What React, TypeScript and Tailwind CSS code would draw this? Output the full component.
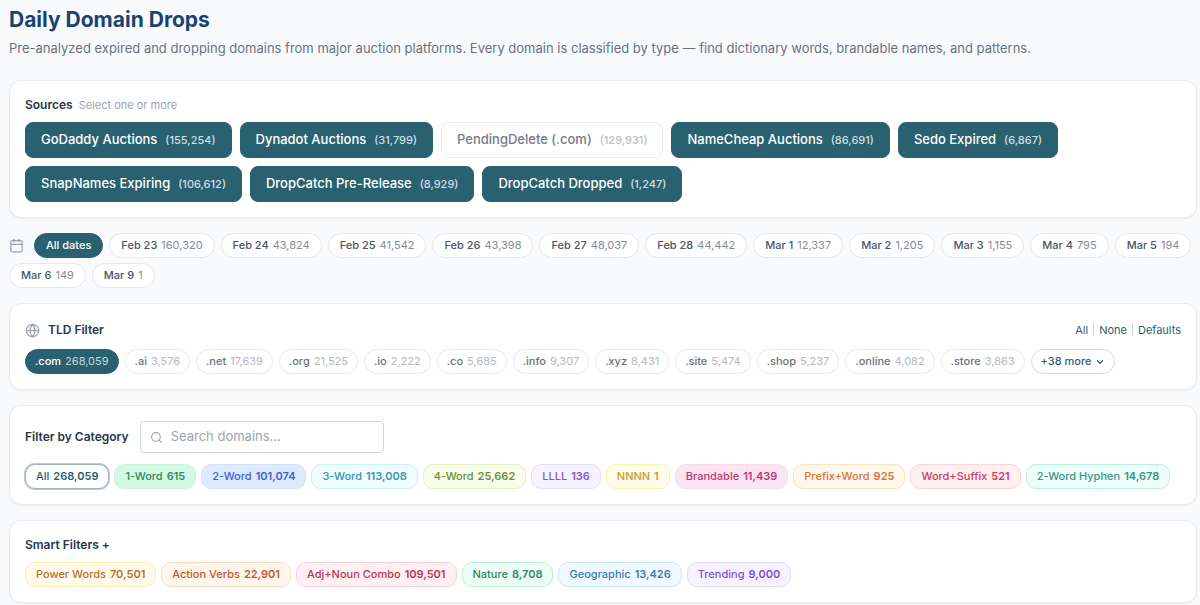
import { Calendar, ChevronDown, Globe, Search } from "lucide-react";

type Item = {
  label: string;
  count?: string;
  active?: boolean;
};

type Tag = {
  label: string;
  count: string;
  style: string;
};

const sources: Item[] = [
  { label: "GoDaddy Auctions", count: "155,254", active: true },
  { label: "Dynadot Auctions", count: "31,799", active: true },
  { label: "PendingDelete (.com)", count: "129,931" },
  { label: "NameCheap Auctions", count: "86,691", active: true },
  { label: "Sedo Expired", count: "6,867", active: true },
  { label: "SnapNames Expiring", count: "106,612", active: true },
  { label: "DropCatch Pre-Release", count: "8,929", active: true },
  { label: "DropCatch Dropped", count: "1,247", active: true },
];

const dates: Item[] = [
  { label: "All dates", active: true },
  { label: "Feb 23", count: "160,320" },
  { label: "Feb 24", count: "43,824" },
  { label: "Feb 25", count: "41,542" },
  { label: "Feb 26", count: "43,398" },
  { label: "Feb 27", count: "48,037" },
  { label: "Feb 28", count: "44,442" },
  { label: "Mar 1", count: "12,337" },
  { label: "Mar 2", count: "1,205" },
  { label: "Mar 3", count: "1,155" },
  { label: "Mar 4", count: "795" },
  { label: "Mar 5", count: "194" },
  { label: "Mar 6", count: "149" },
  { label: "Mar 9", count: "1" },
];

const tlds: Item[] = [
  { label: ".com", count: "268,059", active: true },
  { label: ".ai", count: "3,576" },
  { label: ".net", count: "17,639" },
  { label: ".org", count: "21,525" },
  { label: ".io", count: "2,222" },
  { label: ".co", count: "5,685" },
  { label: ".info", count: "9,307" },
  { label: ".xyz", count: "8,431" },
  { label: ".site", count: "5,474" },
  { label: ".shop", count: "5,237" },
  { label: ".online", count: "4,082" },
  { label: ".store", count: "3,863" },
];

const categories: Tag[] = [
  { label: "All", count: "268,059", style: "border-[#9fb4bd] bg-white text-[#2a5f70] ring-1 ring-[#bccbd1]" },
  { label: "1-Word", count: "615", style: "border-[#c9f5dc] bg-[#d3f8e3] text-[#2f8a68]" },
  { label: "2-Word", count: "101,074", style: "border-[#d3e2fd] bg-[#dde9fd] text-[#4460cf]" },
  { label: "3-Word", count: "113,008", style: "border-[#c5f3fa] bg-[#effdff] text-[#3497ad]" },
  { label: "4-Word", count: "25,662", style: "border-[#e0f5b8] bg-[#f8fee9] text-[#6c8b3c]" },
  { label: "LLLL", count: "136", style: "border-[#e3dcfd] bg-[#f6f3ff] text-[#8655d6]" },
  { label: "NNNN", count: "1", style: "border-[#fdf0a8] bg-[#fffde9] text-[#c99a35]" },
  { label: "Brandable", count: "11,439", style: "border-[#fbdcec] bg-[#fce5f2] text-[#bd3a73]" },
  { label: "Prefix+Word", count: "925", style: "border-[#fddfb9] bg-[#fff8ee] text-[#d9743c]" },
  { label: "Word+Suffix", count: "521", style: "border-[#fdd3da] bg-[#fff0f2] text-[#d13b60]" },
  { label: "2-Word Hyphen", count: "14,678", style: "border-[#b5f3e4] bg-[#effdfa] text-[#399587]" },
];

const smartFilters: Tag[] = [
  { label: "Power Words", count: "70,501", style: "border-[#fdebb0] bg-[#fffbeb] text-[#b86f33]" },
  { label: "Action Verbs", count: "22,901", style: "border-[#fddcc0] bg-[#fff7ee] text-[#c2582f]" },
  { label: "Adj+Noun Combo", count: "109,501", style: "border-[#fdd3da] bg-[#fff0f2] text-[#bd3558]" },
  { label: "Nature", count: "8,708", style: "border-[#bdf2d6] bg-[#edfdf5] text-[#348565]" },
  { label: "Geographic", count: "13,426", style: "border-[#c8e9fc] bg-[#f0f9ff] text-[#377fae]" },
  { label: "Trending", count: "9,000", style: "border-[#e3dcfd] bg-[#f6f3ff] text-[#8050d0]" },
];

const card = "rounded-xl border border-[#e8ebef] bg-white p-[15px] shadow-xs";
const heading = "text-[12px] leading-[18px] font-semibold text-[#27364b]";
const pill = "flex h-[25px] items-center gap-1 border text-[11px] font-medium whitespace-nowrap";

function TagList({ tags }: { tags: Tag[] }) {
  return (
    <div className="flex flex-wrap gap-[5px]">
      {tags.map((tag) => (
        <button
          key={tag.label}
          type="button"
          className={`${pill} rounded-[10px] px-[10px] ${tag.style}`}
        >
          {tag.label}
          <span className="font-semibold">{tag.count}</span>
        </button>
      ))}
    </div>
  );
}

export default function App() {
  return (
    <main className="flex min-h-screen flex-col gap-[15px] bg-[#f8fafc] pr-[3px] pb-[2px] pl-[9px] font-['Inter',sans-serif]">
      <header className="pt-1 pb-[7px]">
        <h1 className="text-[21px] leading-8 font-bold text-[#1c4270]">Daily Domain Drops</h1>
        <p className="mt-[2px] text-[13px] leading-5 text-[#6b7280]">
          Pre-analyzed expired and dropping domains from major auction platforms. Every domain is
          classified by type — find dictionary words, brandable names, and patterns.
        </p>
      </header>

      <section className={card}>
        <div className="mb-2 flex items-center gap-[6px]">
          <h2 className={heading}>Sources</h2>
          <span className="text-[11px] leading-[18px] text-[#9ca3af]">Select one or more</span>
        </div>
        <div className="flex flex-wrap gap-2">
          {sources.map((source) => (
            <button
              key={source.label}
              type="button"
              className={`flex h-9 items-center gap-2 rounded-lg border px-[15px] text-[13px] font-medium whitespace-nowrap ${
                source.active
                  ? "border-[#2a6171] bg-[#2a6171] text-white"
                  : "border-[#eceef1] bg-white text-[#747b88]"
              }`}
            >
              {source.label}
              <span
                className={`text-[11px] ${source.active ? "text-[#d0dee2]" : "text-[#b9bdc5]"}`}
              >
                ({source.count})
              </span>
            </button>
          ))}
        </div>
      </section>

      <div className="flex flex-wrap items-center gap-x-[6px] gap-y-[5px]">
        <Calendar size={15} strokeWidth={2} className="mr-1 text-[#9ca3af]" />
        {dates.map((date) => (
          <button
            key={date.label}
            type="button"
            className={`${pill} rounded-full px-[11px] ${
              date.active
                ? "border-[#2a6171] bg-[#2a6171] text-white"
                : "border-[#e5e7eb] bg-white text-[#4b5563]"
            }`}
          >
            {date.label}
            {date.count && <span className="font-normal text-[#858c98]">{date.count}</span>}
          </button>
        ))}
      </div>

      <section className={card}>
        <div className="mb-2 flex h-[22px] items-center gap-2">
          <Globe size={15} strokeWidth={2} className="text-[#9ca3af]" />
          <h2 className={heading}>TLD Filter</h2>
          <div className="ml-auto flex items-center gap-[5px] text-[11px] text-[#2a6171]">
            <button type="button">All</button>
            <span className="h-3 w-px bg-[#d1d5db]" />
            <button type="button">None</button>
            <span className="h-3 w-px bg-[#d1d5db]" />
            <button type="button">Defaults</button>
          </div>
        </div>
        <div className="flex flex-wrap gap-[6px]">
          {tlds.map((tld) => (
            <button
              key={tld.label}
              type="button"
              className={`${pill} rounded-full px-[9px] ${
                tld.active
                  ? "border-[#2a6171] bg-[#2a6171] text-white"
                  : "border-[#e5e7eb] bg-white text-[#6b7280]"
              }`}
            >
              {tld.label}
              <span className={`font-normal ${tld.active ? "text-[#c3d4d9]" : "text-[#b4b8c0]"}`}>
                {tld.count}
              </span>
            </button>
          ))}
          <button
            type="button"
            className={`${pill} rounded-full border-[#d5dde2] bg-white px-[9px] text-[#2a6171]`}
          >
            +38 more
            <ChevronDown size={10} strokeWidth={3} />
          </button>
        </div>
      </section>

      <section className={card}>
        <div className="mb-[11px] flex items-center gap-[11px]">
          <h2 className={heading}>Filter by Category</h2>
          <label className="flex h-8 w-[244px] items-center gap-2 rounded-[4px] border border-[#d1d5db] bg-white px-[9px]">
            <Search size={13} className="shrink-0 text-[#9ca3af]" />
            <input
              type="text"
              aria-label="Search domains"
              placeholder="Search domains..."
              className="min-w-0 flex-1 text-[13px] outline-none placeholder:text-[#9ca3af]"
            />
          </label>
        </div>
        <TagList tags={categories} />
      </section>

      <section className={card}>
        <h2 className={`mb-2 ${heading}`}>Smart Filters +</h2>
        <TagList tags={smartFilters} />
      </section>
    </main>
  );
}
